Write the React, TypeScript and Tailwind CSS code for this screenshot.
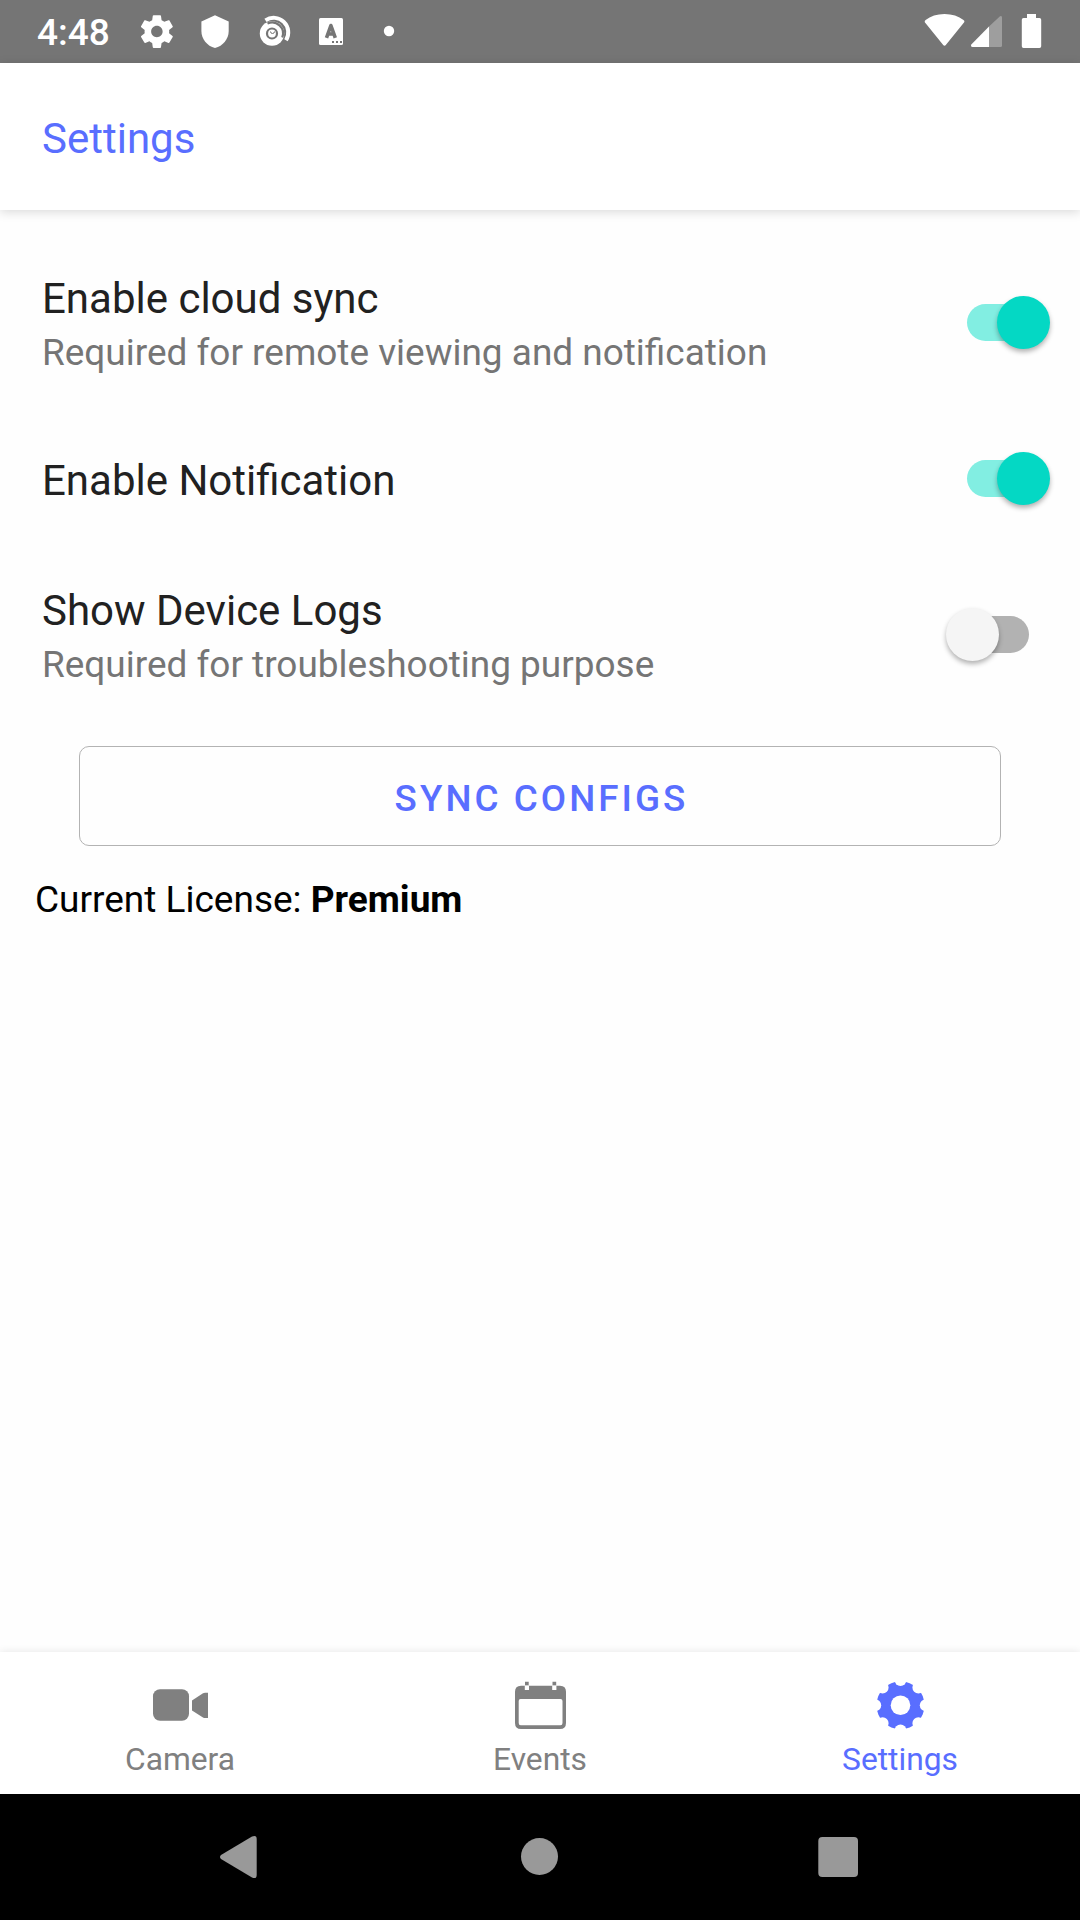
import React from "react";

function StatusBar() {
  return (
    <header className="h-[63px] bg-[#757575] flex items-center text-white shrink-0">
      <div className="w-[110px] ml-[37px] h-full pt-[3px] text-[37px] leading-[60px] font-medium">4:48</div>
      <svg className="w-[273px] h-[63px] ml-[-7px]" viewBox="140 0 273 63" fill="currentColor">
        <g transform="translate(137.2 11.9) scale(1.64)">
          <path d="M19.43 12.98c.04-.32.07-.64.07-.98s-.03-.66-.07-.98l2.11-1.65c.19-.15.24-.42.12-.64l-2-3.46c-.12-.22-.39-.3-.61-.22l-2.49 1c-.52-.4-1.08-.73-1.69-.98l-.38-2.65C14.46 2.18 14.25 2 14 2h-4c-.25 0-.46.18-.49.42l-.38 2.65c-.61.25-1.17.59-1.69.98l-2.49-1c-.23-.09-.49 0-.61.22l-2 3.46c-.13.22-.07.49.12.64l2.11 1.65c-.04.32-.07.65-.07.98s.03.66.07.98l-2.11 1.65c-.19.15-.24.42-.12.64l2 3.46c.12.22.39.3.61.22l2.49-1c.52.4 1.08.73 1.69.98l.38 2.65c.03.24.24.42.49.42h4c.25 0 .46-.18.49-.42l.38-2.65c.61-.25 1.17-.59 1.69-.98l2.49 1c.23.09.49 0 .61-.22l2-3.46c.12-.22.07-.49-.12-.64l-2.11-1.65zM12 15.5c-1.93 0-3.5-1.57-3.5-3.5s1.57-3.5 3.5-3.5 3.500 1.570 3.500 3.500-1.570 3.500-3.500 3.500z" />
        </g>
        <path d="M215 15.300L228.700 21.500V31C228.700 39 223 46 215 48C207 46 201.400 39 201.400 31V21.500Z" />
        <circle cx="272" cy="33.500" r="12.200" />
        <g fill="none">
          <path d="M265.500 20.300A14.600 14.600 0 0 1 286 40.200" stroke="currentColor" strokeWidth="4" />
          <path d="M267.500 23.500A11 11 0 0 1 282.300 37.500" stroke="#757575" strokeWidth="2.300" />
          <circle cx="272" cy="33.500" r="5" stroke="#757575" strokeWidth="2.200" />
          <path d="M270.500 31.500q0 2 2 2t2-2" stroke="#757575" strokeWidth="1" />
        </g>
        <rect x="319" y="18" width="24" height="27" rx="1.500" />
        <path d="M326.500 37.800L330.900 25.500L335.300 37.800M328 34H334" fill="none" stroke="#757575" strokeWidth="3.600" strokeLinejoin="round" />
        <path d="M332 41h2v2h-2zM336 41h2v2h-2zM340 41h2v2h-2z" fill="#757575" />
        <circle cx="389" cy="31" r="5.200" />
      </svg>
      <svg className="w-[124px] h-[63px] ml-auto mr-[36px]" viewBox="920 0 124 63" fill="currentColor">
        <path d="M924.800 22.200Q924.300 20.900 925.600 20Q933 14 944.500 14Q956 14 963.500 20Q965 20.900 964.200 22.200L946 44.800Q944.500 46.500 943 44.800Z" />
        <path d="M989 26.500L1000 16.300Q1002 15.300 1002 17.500V45.500Q1002 47 1000.500 47H989Z" opacity=".3" />
        <path d="M989 26.500V47H972.500Q970.300 46.500 971.300 44.500Z" />
        <path d="M1027 14h9v4h3.500q1.700 0 1.700 1.700v26.500q0 1.700-1.700 1.700h-16q-1.700 0-1.700-1.700V19.700q0-1.700 1.700-1.700h3.500z" />
      </svg>
    </header>
  );
}

function Toggle({ on }: { on: boolean }) {
  return on ? (
    <div className="mr-[30px] w-[83px] h-[53px] flex items-center">
      <div className="w-[62px] h-[37px] shrink-0 rounded-full bg-[#82eee2]" />
      <div className="ml-[-32px] size-[53px] shrink-0 rounded-full bg-[#04d8c4] shadow-[0_3px_5px_rgba(0,0,0,0.3)]" />
    </div>
  ) : (
    <div className="mr-[51px] w-[83px] h-[53px] flex flex-row-reverse items-center">
      <div className="w-[62px] h-[37px] shrink-0 rounded-full bg-[#b2b2b2]" />
      <div className="z-10 mr-[-32px] size-[53px] shrink-0 rounded-full bg-[#f5f5f5] shadow-[0_3px_5px_rgba(0,0,0,0.3)]" />
    </div>
  );
}

function Row({ title, note, on }: { title: string; note?: string; on: boolean }) {
  return (
    <div className="h-[156px] pl-[42px] flex items-center justify-between">
      <div className="pt-[4px]">
        <div className="text-[42px] leading-[57px] text-[#212121]">{title}</div>
        {note && <div className="text-[36.96px] leading-[51px] text-[#757575]">{note}</div>}
      </div>
      <Toggle on={on} />
    </div>
  );
}

function Tab({ label, active, children }: { label: string; active?: boolean; children: React.ReactNode }) {
  return (
    <div className={`flex-1 flex flex-col items-center ${active ? "text-[#596eff]" : "text-[#808080]"}`}>
      <svg className="w-[60px] h-[60px] mt-[23px]" viewBox="0 0 60 60" fill="currentColor">
        {children}
      </svg>
      <div className="text-[31.75px] leading-[44px] mt-[3px]">{label}</div>
    </div>
  );
}

const notches = [0, 45, 90, 135, 180, 225, 270, 315];

export default function App() {
  return (
    <div className="w-[1080px] h-[1920px] flex flex-col bg-[#fefefe] overflow-hidden font-['Roboto',sans-serif]">
      <StatusBar />
      <div className="h-[147px] shrink-0 pl-[42px] pt-[4px] flex items-center bg-white shadow-[0_2px_10px_rgba(0,0,0,0.15)]">
        <h1 className="text-[42px] leading-[56px] text-[#596eff]">Settings</h1>
      </div>
      <main className="flex-1 pt-[34px]">
        <Row title="Enable cloud sync" note="Required for remote viewing and notification" on />
        <Row title="Enable Notification" on />
        <Row title="Show Device Logs" note="Required for troubleshooting purpose" on={false} />
        <button className="block ml-[79px] mt-[34px] w-[922px] h-[100px] pt-[6px] pl-[3px] border border-[#b3b3b3] rounded-[10px] text-[36.75px] font-medium tracking-[3.05px] text-[#596eff]">
          SYNC CONFIGS
        </button>
        <p className="ml-[35px] mt-[29px] text-[37px] leading-[50px] text-black">
          Current License: <b className="font-bold">Premium</b>
        </p>
      </main>
      <nav className="h-[142px] shrink-0 flex bg-white shadow-[0_0_8px_rgba(0,0,0,0.1)]">
        <Tab label="Camera">
          <rect x="3" y="14.300" width="36" height="31.500" rx="7" />
          <path d="M42 25.500L53 18.200Q54 17.700 55 17.700H58V43H55Q54 43 53 42.400L42 35.500Z" />
        </Tab>
        <Tab label="Events">
          <path fillRule="evenodd" d="M10.500 10.700H50Q56 10.700 56 16.700V48Q56 54 50 54H11Q5 54 5 48V16.700Q5 10.700 11 10.700ZM10.500 24Q8.700 24 8.700 26V48Q8.700 50.200 10.700 50.200H50.500Q52.500 50.200 52.500 48V26Q52.500 24 50.500 24Z" />
          <path d="M14.800 10.500h4.200v4.500h-4.200zM42.200 10.500h4.200v4.500h-4.200z" fill="#fff" />
          <path d="M15 6.800h3.700v3.500h-3.700zM42.500 6.800h3.700v3.500h-3.700z" />
        </Tab>
        <Tab label="Settings" active>
          <circle cx="30.500" cy="30.300" r="24" />
          <g fill="#fff">
            <circle cx="30.500" cy="30.300" r="9.800" />
            {notches.map((a) => (
              <circle key={a} cx="30.500" cy="5" r="6" transform={`rotate(${a} 30.500 30.300)`} />
            ))}
          </g>
        </Tab>
      </nav>
      <footer className="h-[126px] shrink-0 bg-black">
        <svg className="w-[1080px] h-[126px]" viewBox="0 0 1080 126" fill="#999">
          <path d="M221 61Q219 63 221 65L252 83.500Q256.700 85.500 256.700 81V45Q256.700 40.500 252 42.500Z" />
          <circle cx="539.500" cy="62.500" r="18.500" />
          <rect x="818.300" y="43" width="39.700" height="40" rx="4" />
        </svg>
      </footer>
    </div>
  );
}
